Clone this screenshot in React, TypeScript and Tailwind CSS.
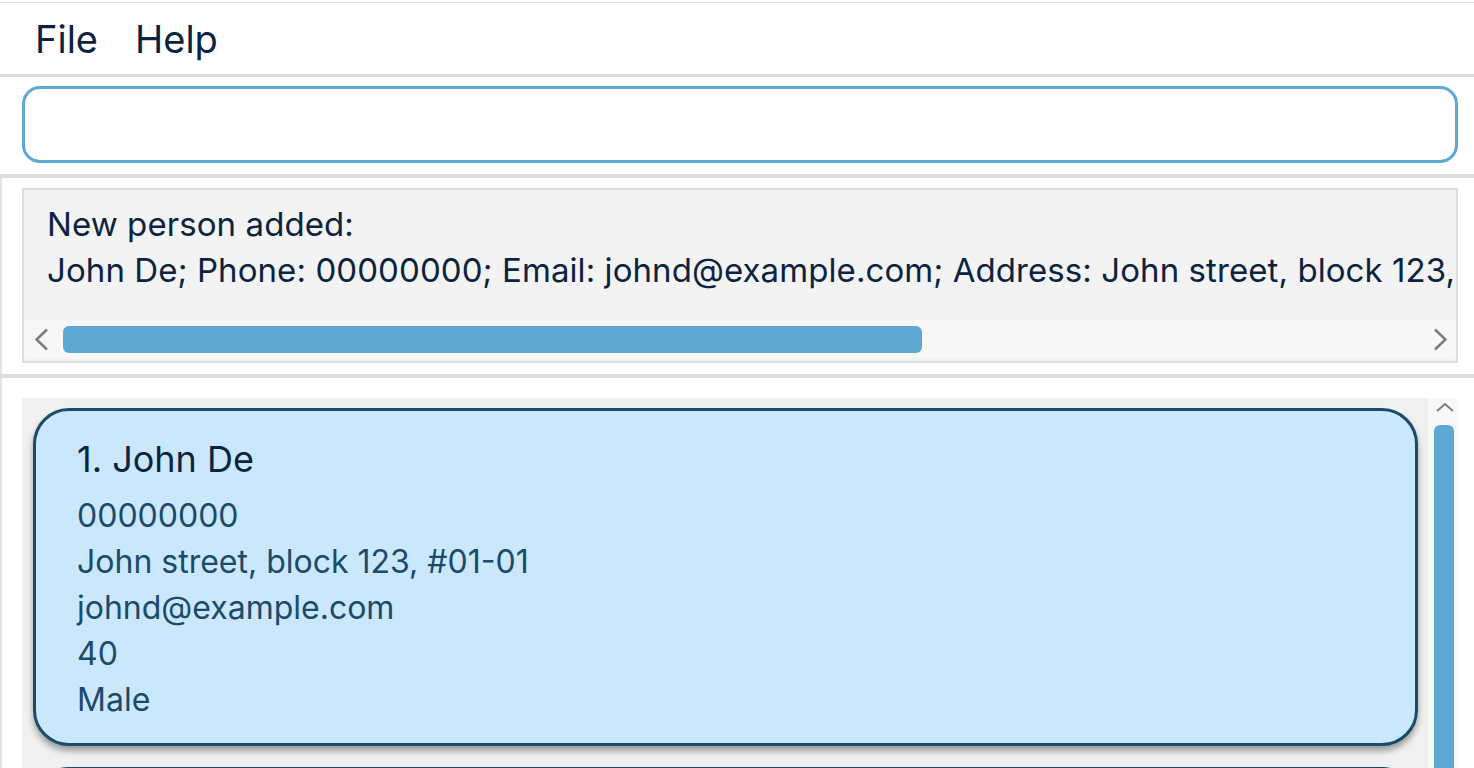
const people = [
  {
    name: "John De",
    phone: "00000000",
    address: "John street, block 123, #01-01",
    email: "johnd@example.com",
    age: "40",
    gender: "Male",
  },
  {
    name: "Jane Tan",
    phone: "91234567",
    address: "Jane avenue, block 45, #02-02",
    email: "janet@example.com",
    age: "32",
    gender: "Female",
  },
]

function Chevron({ dir }: { dir: "left" | "right" }) {
  const pts = dir === "left" ? "12,1.5 1.5,11.5 12,21.5" : "1,1.5 11.5,11.5 1,21.5"
  return (
    <svg width="13" height="23" viewBox="0 0 13 23" className="shrink-0">
      <polyline points={pts} fill="none" stroke="#7d7d7d" strokeWidth="2.6" />
    </svg>
  )
}

function PersonCard({ index, p }: { index: number; p: (typeof people)[number] }) {
  return (
    <div className="rounded-[36px] border-[3px] border-[#1b4a6b] bg-[#cae7fb] pl-[41px] pt-[25px] pb-[20px] shadow-[0_5px_6px_rgba(0,0,0,0.35)]">
      <div className="text-[36px] leading-[46px] text-[#0c2340]">
        {index}. {p.name}
      </div>
      <div className="mt-[11px] text-[32px] leading-[46px] text-[#1b4a6b]">
        <div>{p.phone}</div>
        <div>{p.address}</div>
        <div>{p.email}</div>
        <div>{p.age}</div>
        <div>{p.gender}</div>
      </div>
    </div>
  )
}

export default function App() {
  return (
    <div className="h-[768px] w-full overflow-hidden bg-white font-['Inter','Liberation_Sans',sans-serif] text-[#0c2340]">
      {/* menu */}
      <div className="mt-[2px] border-t border-[#dedede]" />
      <div className="flex h-[71px] items-center gap-[37px] pl-[35px] text-[38px] leading-none">
        <span>File</span>
        <span>Help</span>
      </div>
      <div className="h-[3px] bg-[#dcdcdc]" />

      {/* command box */}
      <div className="pl-[22px] pr-[16px] pt-[9px] pb-[11px]">
        <div className="h-[77px] rounded-[18px] border-[3px] border-[#5fa8d3] bg-white" />
      </div>
      <div className="h-[4px] bg-[#dcdcdc]" />

      {/* result display */}
      <div className="border-l-2 border-[#e2e2e2] pl-[20px] pr-[16px] pt-[10px] pb-[11px]">
        <div className="flex h-[175px] flex-col border-2 border-[#dcdcdc] bg-[#f3f3f3]">
          <div className="flex-1 overflow-hidden whitespace-nowrap pl-[23px] pt-[11px] text-[33px] leading-[46px] tracking-[0.08px]">
            <div>New person added:</div>
            <div>John De; Phone: 00000000; Email: johnd@example.com; Address: John street, block 123,</div>
          </div>
          <div className="mb-[3px] flex h-[38px] items-center rounded-b-[6px] bg-[#f7f7f7]">
            <div className="ml-[11px]">
              <Chevron dir="left" />
            </div>
            <div className="ml-[15px] h-[27px] w-[859px] rounded-[6px] bg-[#5fa8d3]" />
            <div className="flex-1" />
            <div className="mr-[9px]">
              <Chevron dir="right" />
            </div>
          </div>
        </div>
      </div>
      <div className="h-[4px] bg-[#dcdcdc]" />

      {/* person list */}
      <div className="flex h-[390px] border-l-2 border-[#e2e2e2] pl-[20px] pr-[16px] pt-[20px]">
        <div className="flex flex-1 flex-col gap-[21px] bg-[#f0f0f0] pl-[11px] pr-[10px] pt-[10px]">
          {people.map((p, i) => (
            <PersonCard key={i} index={i + 1} p={p} />
          ))}
        </div>
        <div className="flex w-[30px] flex-col items-center bg-[#f8f8f8]">
          <svg width="18" height="9" viewBox="0 0 18 9" className="mt-[5px] ml-[4px]">
            <polyline points="1,8 9,1 17,8" fill="none" stroke="#7d7d7d" strokeWidth="2" />
          </svg>
          <div className="mt-[13px] ml-[2px] w-[20px] flex-1 rounded-t-[6px] bg-[#5fa8d3]" />
        </div>
      </div>
    </div>
  )
}
